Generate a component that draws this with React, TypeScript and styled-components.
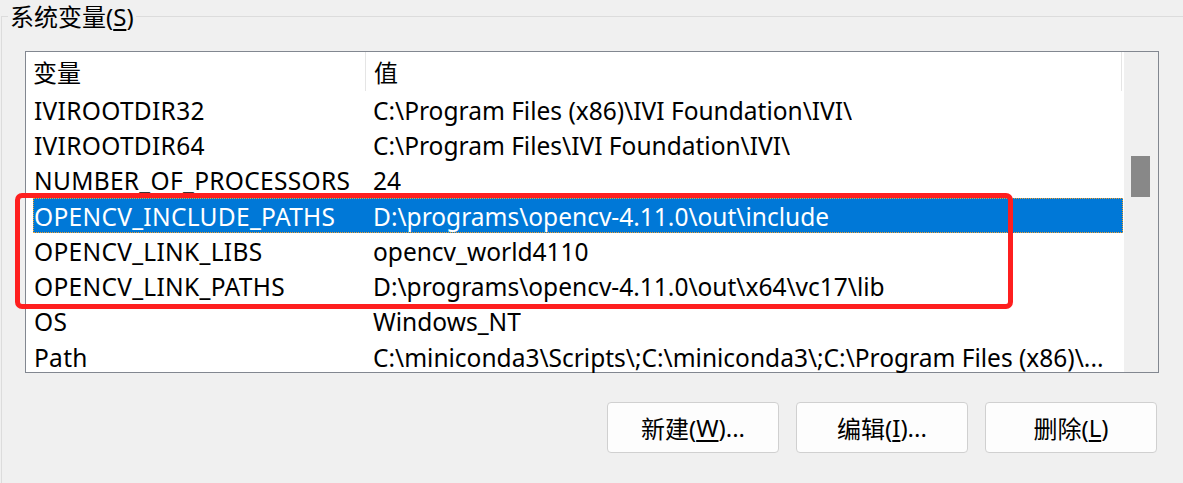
import React from 'react';
import styled, { createGlobalStyle } from 'styled-components';

const GlobalStyle = createGlobalStyle`
  html, body {
    margin: 0;
    padding: 0;
    background: #f0f0f0;
  }
  body {
    font-family: 'Noto Sans', 'Noto Sans CJK SC', sans-serif;
    color: #000;
  }
`;

type Variable = { name: string; value: string };

const variables: Variable[] = [
  { name: 'IVIROOTDIR32', value: 'C:\\Program Files (x86)\\IVI Foundation\\IVI\\' },
  { name: 'IVIROOTDIR64', value: 'C:\\Program Files\\IVI Foundation\\IVI\\' },
  { name: 'NUMBER_OF_PROCESSORS', value: '24' },
  { name: 'OPENCV_INCLUDE_PATHS', value: 'D:\\programs\\opencv-4.11.0\\out\\include' },
  { name: 'OPENCV_LINK_LIBS', value: 'opencv_world4110' },
  { name: 'OPENCV_LINK_PATHS', value: 'D:\\programs\\opencv-4.11.0\\out\\x64\\vc17\\lib' },
  { name: 'OS', value: 'Windows_NT' },
  { name: 'Path', value: 'C:\\miniconda3\\Scripts\\;C:\\miniconda3\\;C:\\Program Files (x86)\\...' },
];

const SELECTED = 3;

const App = () => {
  return (
    <>
      <GlobalStyle />
      <Page>
        <Frame>
          <Legend>
            系统变量(<u>S</u>)
          </Legend>
          <ListBox>
            <Table>
              <HeaderRow>
                <HeaderCell $width={340}>变量</HeaderCell>
                <HeaderCell $width={756}>值</HeaderCell>
              </HeaderRow>
              {variables.map((v, i) => (
                <Row key={v.name} $selected={i === SELECTED}>
                  <NameCell>{v.name}</NameCell>
                  <ValueCell>{v.value}</ValueCell>
                </Row>
              ))}
            </Table>
            <ScrollBar>
              <Thumb />
            </ScrollBar>
          </ListBox>
          <ButtonBar>
            <Button>
              新建(<u>W</u>)...
            </Button>
            <Button>
              编辑(<u>I</u>)...
            </Button>
            <Button>
              删除(<u>L</u>)
            </Button>
          </ButtonBar>
        </Frame>
        <Highlight />
      </Page>
    </>
  );
};

export default App;

const Page = styled.div`
  position: relative;
  width: 1183px;
  height: 483px;
  overflow: hidden;
  padding-top: 16px;
  box-sizing: border-box;
`;

const Frame = styled.div`
  margin-left: 1px;
  height: 500px;
  border-top: 1px solid #dcdcdc;
  border-left: 1px solid #dcdcdc;
`;

const Legend = styled.div`
  display: inline-block;
  margin: -15px 0 0 6px;
  padding: 0 2px;
  height: 30px;
  line-height: 30px;
  font-size: 24px;
  background: #f0f0f0;
  vertical-align: top;

  u {
    text-underline-offset: 3px;
  }
`;

const ListBox = styled.div`
  display: flex;
  margin: 12px 0 0 23px;
  width: 1132px;
  height: 320px;
  border: 1px solid #828790;
  background: #fff;
`;

const Table = styled.div`
  width: 1098px;
  display: flex;
  flex-direction: column;
`;

const HeaderRow = styled.div`
  display: flex;
  height: 40px;
  flex-shrink: 0;
`;

const HeaderCell = styled.div<{ $width: number }>`
  width: ${(p) => p.$width}px;
  padding-left: 8px;
  font-size: 24px;
  line-height: 42px;
  box-sizing: border-box;
  border-right: 1px solid #e5e5e5;
  margin-bottom: 1px;
  &:first-child {
    padding-left: 7px;
  }
`;

const Row = styled.div<{ $selected?: boolean }>`
  display: flex;
  align-items: center;
  height: 35.3px;
  flex-shrink: 0;
  margin-left: 7px;
  padding-top: 1px;
  width: 1090px;
  box-sizing: border-box;
  font-size: 24.5px;
  white-space: nowrap;
  background: ${(p) => (p.$selected ? '#0078d7' : 'transparent')};
  color: ${(p) => (p.$selected ? '#fff' : '#000')};
  border: 1px ${(p) => (p.$selected ? 'dotted #f0a030' : 'solid transparent')};
`;

const NameCell = styled.div`
  width: 333px;
  letter-spacing: 0.3px;
  overflow: hidden;
`;

const ValueCell = styled.div`
  padding-left: 6px;
  overflow: hidden;
`;

const ScrollBar = styled.div`
  width: 34px;
  background: #f0f0f0;
  margin-left: auto;
  padding-top: 104px;
  box-sizing: border-box;
`;

const Thumb = styled.div`
  width: 19px;
  height: 41px;
  margin-left: 7px;
  background: #888888;
`;

const ButtonBar = styled.div`
  display: flex;
  gap: 17px;
  margin: 29px 0 0 605px;
`;

const Button = styled.div`
  width: 172px;
  height: 51px;
  box-sizing: border-box;
  border: 1px solid #d0d0d0;
  border-radius: 4px;
  background: #fdfdfd;
  font-size: 24px;
  display: flex;
  align-items: center;
  justify-content: center;

  u {
    text-underline-offset: 3px;
  }
`;

const Highlight = styled.div`
  position: absolute;
  left: 15px;
  top: 193px;
  width: 998px;
  height: 116px;
  box-sizing: border-box;
  border: 5px solid #fe1f1f;
  border-radius: 7px;
  pointer-events: none;
`;
